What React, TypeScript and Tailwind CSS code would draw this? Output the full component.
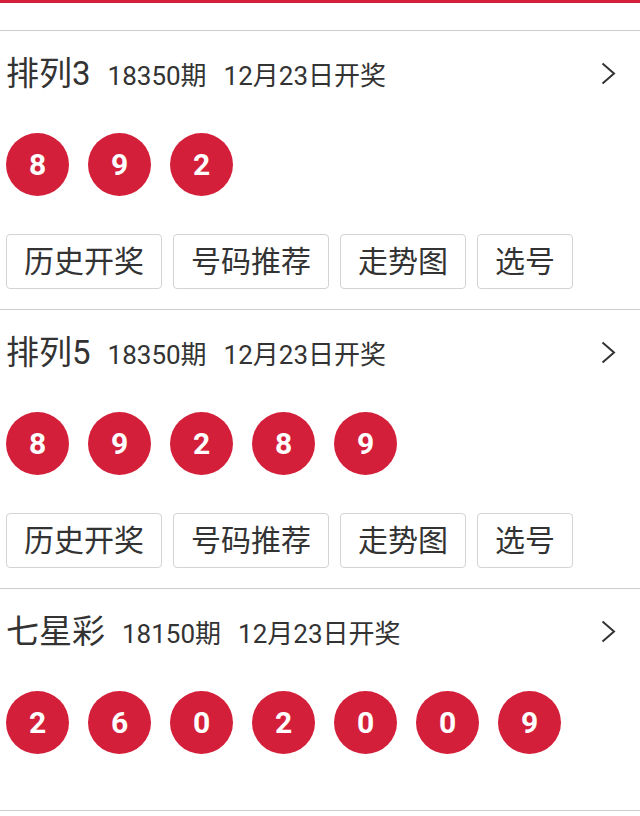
type Lottery = {
  name: string;
  issue: string;
  date: string;
  numbers: number[];
  actions: boolean;
};

const lotteries: Lottery[] = [
  { name: '排列3', issue: '18350期', date: '12月23日开奖', numbers: [8, 9, 2], actions: true },
  { name: '排列5', issue: '18350期', date: '12月23日开奖', numbers: [8, 9, 2, 8, 9], actions: true },
  { name: '七星彩', issue: '18150期', date: '12月23日开奖', numbers: [2, 6, 0, 2, 0, 0, 9], actions: false },
];

const actions = ['历史开奖', '号码推荐', '走势图', '选号'];

function Chevron() {
  return (
    <svg width="15" height="23" viewBox="0 0 15 23" fill="none" className="text-[#333333]">
      <polyline points="1.5,1.5 13,11.5 1.5,21.5" stroke="currentColor" strokeWidth="2" strokeLinejoin="miter" />
    </svg>
  );
}

function Ball({ value }: { value: number }) {
  return (
    <div className="w-[63px] h-[63px] rounded-full bg-[#d41f3a] flex items-center justify-center text-white text-[30px] font-bold leading-none">
      {value}
    </div>
  );
}

function LotterySection({ item }: { item: Lottery }) {
  return (
    <section className={`border-b border-[#cdcdcd] ${item.actions ? 'pb-[20px]' : 'pb-[56px]'}`}>
      {/* header */}
      <div className="h-[84px] flex items-center pl-[6px] pr-[24px]">
        <div className="flex-1 flex items-baseline text-[#333333]">
          <span className="text-[33px] leading-none">{item.name}</span>
          <span className="text-[26px] leading-none ml-[17px]">{item.issue}</span>
          <span className="text-[26px] leading-none ml-[17px]">{item.date}</span>
        </div>
        <Chevron />
      </div>

      {/* numbers */}
      <div className="mt-[18px] pl-[6px] flex gap-[19px]">
        {item.numbers.map((n, i) => (
          <Ball key={i} value={n} />
        ))}
      </div>

      {/* actions */}
      {item.actions && (
        <div className="mt-[38px] pl-[6px] flex gap-[11px]">
          {actions.map((label) => (
            <button
              key={label}
              className="h-[55px] px-[17px] border border-[#d3d3d3] rounded-[4px] bg-white text-[30px] leading-none text-[#333333]"
            >
              {label}
            </button>
          ))}
        </div>
      )}
    </section>
  );
}

export default function App() {
  return (
    <div
      className="w-[640px] h-[816px] bg-white overflow-hidden"
      style={{ fontFamily: 'Roboto, "Noto Sans CJK SC", sans-serif' }}
    >
      <div className="h-[3px] bg-[#d41f3a]" />
      <div className="h-[27px] border-b border-[#cdcdcd] box-content" />
      {lotteries.map((item) => (
        <LotterySection key={item.name} item={item} />
      ))}
    </div>
  );
}
